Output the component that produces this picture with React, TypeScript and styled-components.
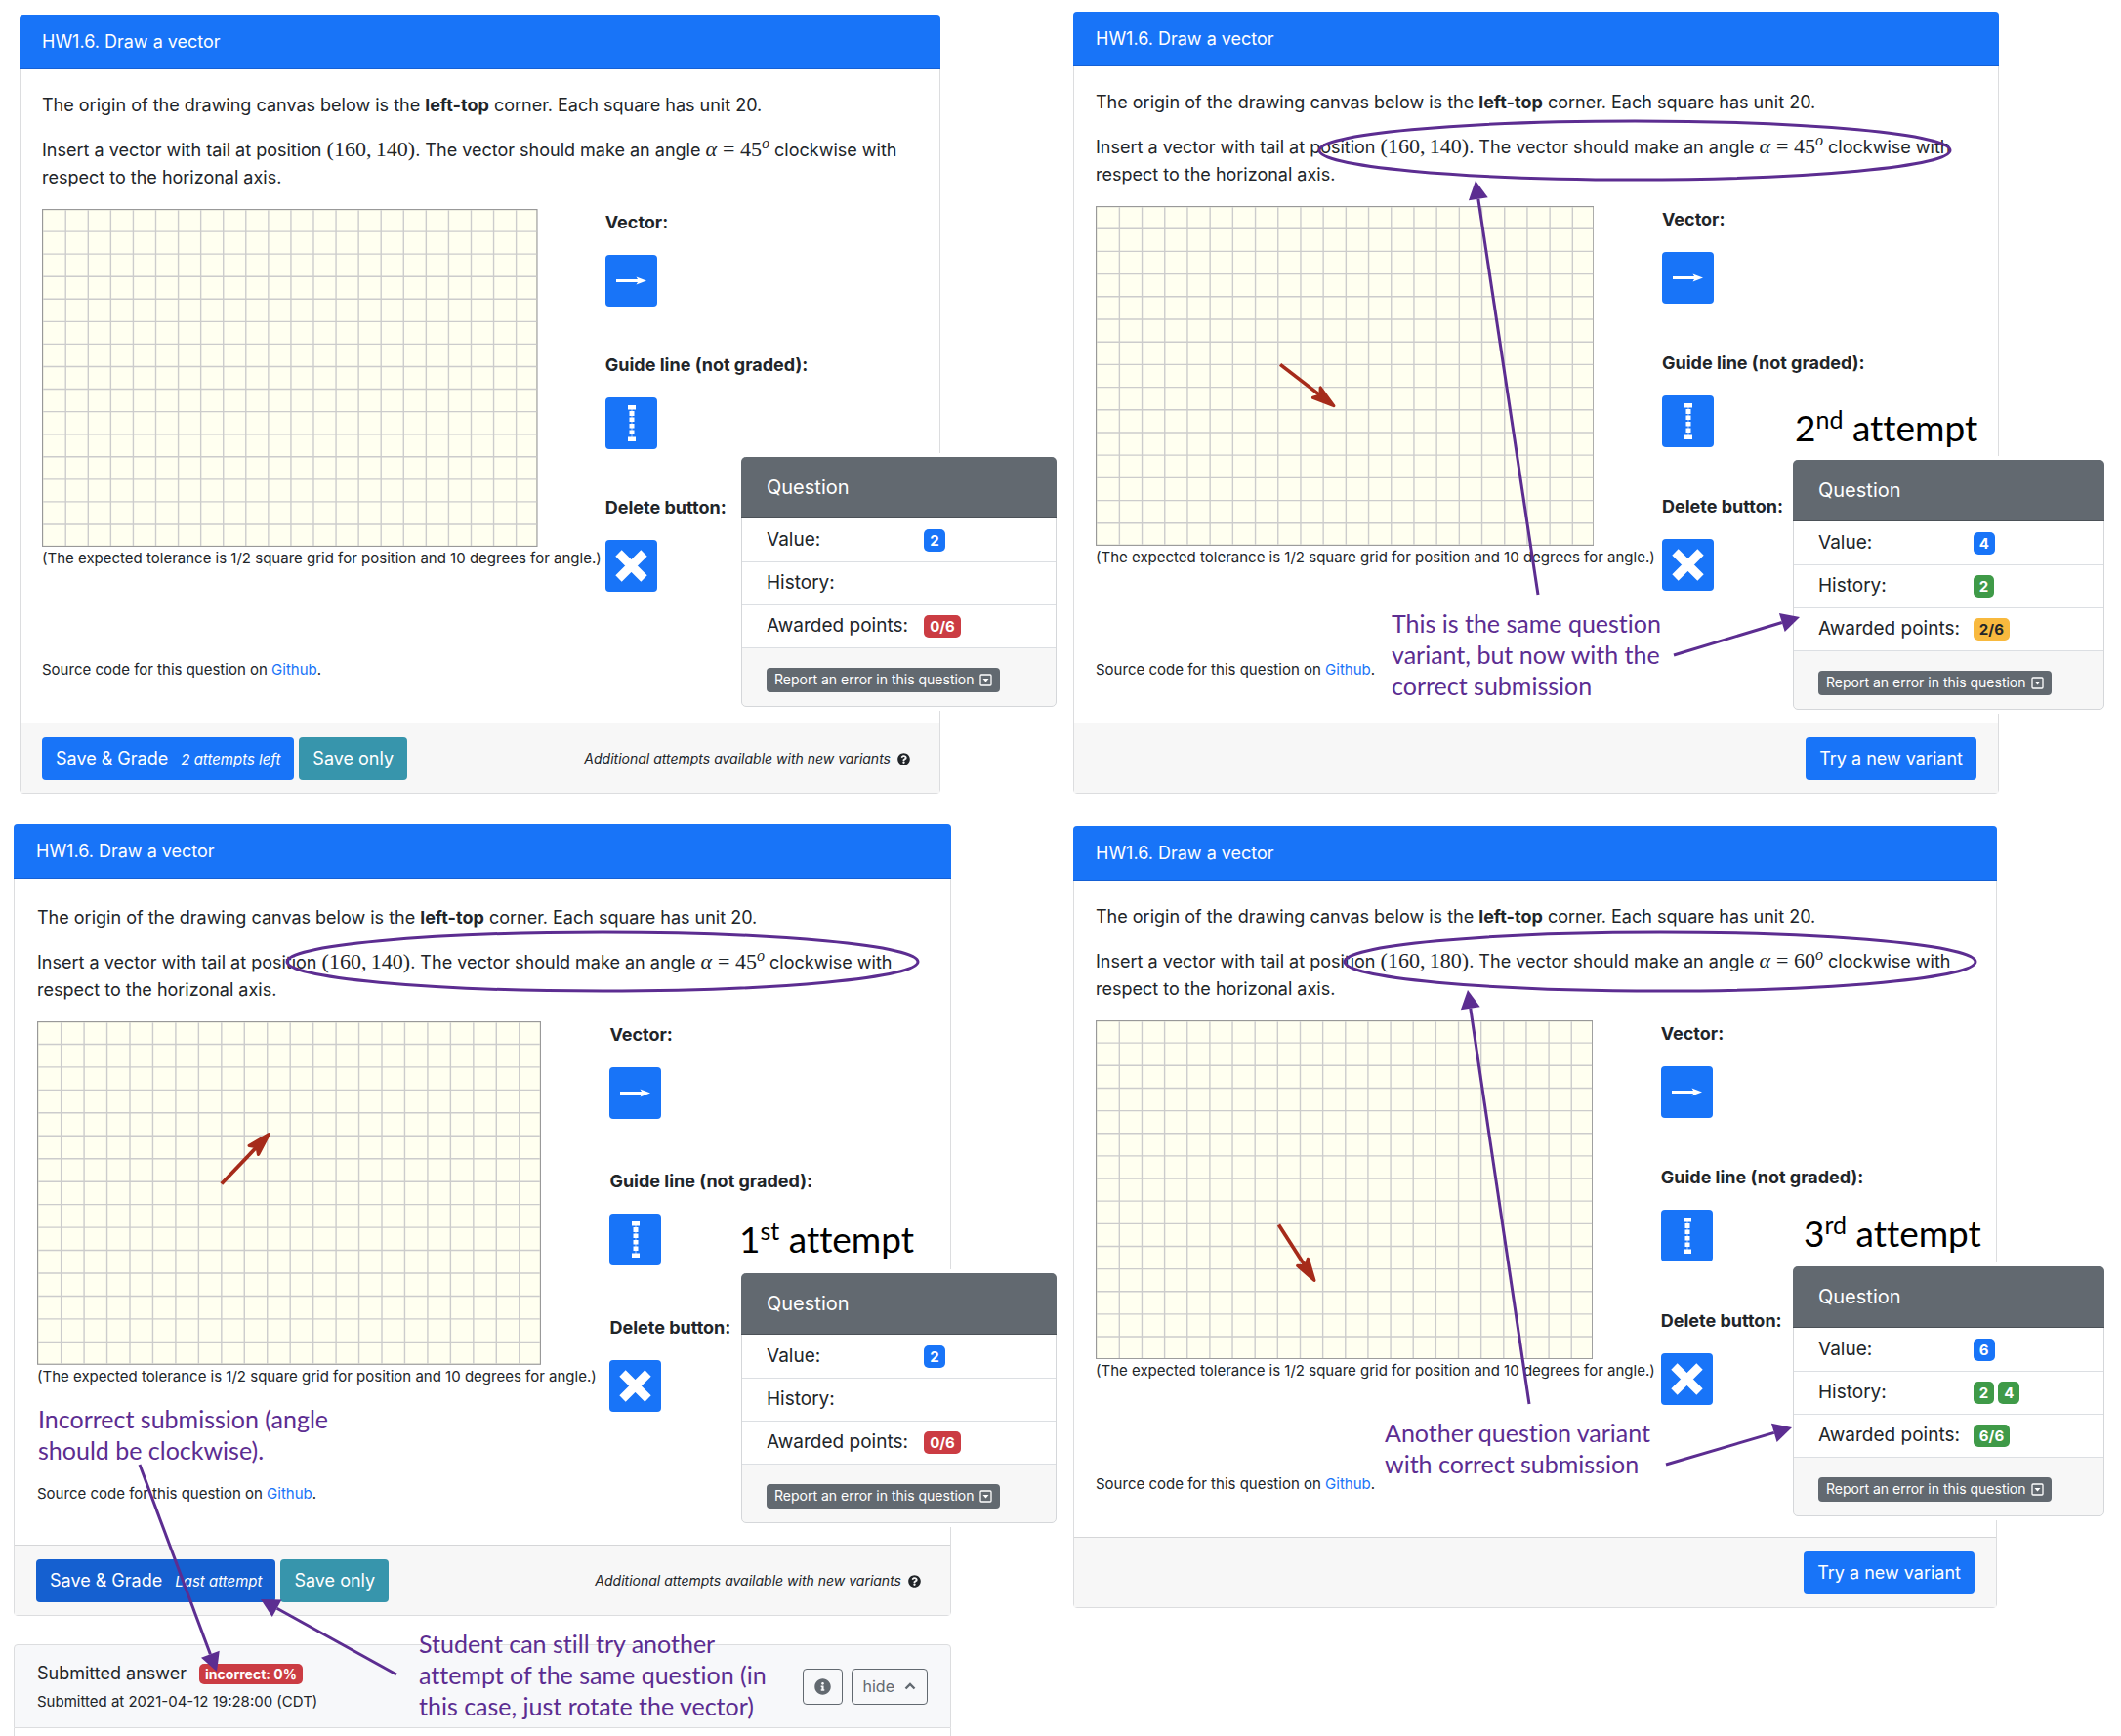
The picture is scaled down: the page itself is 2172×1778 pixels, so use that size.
import React from "react";
import styled, { createGlobalStyle } from "styled-components";

const ui = `Inter, "Liberation Sans", sans-serif`;
const note = `Lato, "Open Sans", sans-serif`;
const purple = "#5c2d91";

const Global = createGlobalStyle`
  *, *::before, *::after { box-sizing: border-box; }
  body { margin: 0; background: #fff; color: #212529; font-family: ${ui}; font-size: 18px; line-height: 28px; }
  p { margin: 0; }
`;

const Board = styled.main`
  display: grid;
  grid-template-columns: minmax(0, 1fr) minmax(0, 1fr);
  row-gap: 31px;
  overflow: hidden;
`;

const Cell = styled.section<{ $pad: string }>`
  position: relative;
  padding: ${(p) => p.$pad};
`;

const Card = styled.article`
  border: 1px solid #dcdddf;
  border-radius: 4px;
  background: #fff;
`;

const CardTitle = styled.h2`
  margin: -1px -1px 0;
  padding: 14px 23px;
  height: 56px;
  border-bottom: 1px solid #1560d4;
  border-radius: 4px 4px 0 0;
  background: #1874f8;
  color: #fff;
  font-size: 18px;
  font-weight: 400;
`;

const CardBody = styled.div<{ $roomy?: boolean }>`
  padding: ${(p) => (p.$roomy ? "26px 23px 40px" : "23px 22px 42px")};
`;

const Para = styled.p`
  margin-bottom: 18px;
`;

const Maths = styled.span`
  font-family: "Liberation Serif", "DejaVu Serif", serif;
  font-size: 22px;
  line-height: 1;
  white-space: nowrap;
  sup { font-size: 16px; font-style: italic; line-height: 0; }
  i { margin-right: 6px; }
`;

const Work = styled.div`
  display: flex;
`;

const DrawSide = styled.div`
  flex: 0 0 64.3%;
`;

const Canvas = styled.svg`
  display: block;
  width: 88%;
  height: auto;
`;

const Small = styled.p`
  font-size: 15px;
  line-height: 24px;
  white-space: nowrap;
  a { color: #1874f8; text-decoration: none; }
`;

const Tools = styled.div<{ $gap: number }>`
  display: flex;
  flex-direction: column;
  gap: ${(p) => p.$gap}px;
  margin-bottom: ${(p) => p.$gap + 22}px;
`;

const Tool = styled.label`
  display: flex;
  flex-direction: column;
  align-items: flex-start;
  gap: 19px;
  font-weight: 700;
  white-space: nowrap;
`;

const ToolButton = styled.button`
  width: 53px;
  height: 53px;
  padding: 0;
  border: 0;
  border-radius: 4px;
  background: #1874f8;
  svg { display: block; width: 53px; height: 53px; }
`;

const CardFooter = styled.footer<{ $end?: boolean }>`
  display: flex;
  align-items: center;
  justify-content: ${(p) => (p.$end ? "flex-end" : "flex-start")};
  gap: 5px;
  padding: 14px 22px 13px;
  border-top: 1px solid #d5d6d8;
  background: #f7f7f7;
`;

const Button = styled.button<{ $tone?: string }>`
  height: 44px;
  padding: 0 14px;
  border: 0;
  border-radius: 4px;
  background: ${(p) => p.$tone || "#1874f8"};
  color: #fff;
  font: 400 18px/28px ${ui};
  white-space: nowrap;
  em { margin-left: 8px; font-size: 15px; }
`;

const Remark = styled.div`
  display: flex;
  align-items: center;
  gap: 7px;
  margin-left: auto;
  padding-right: 8px;
  font-size: 14px;
  font-style: italic;
  white-space: nowrap;
`;

const Widget = styled.aside<{ $top: number; $right: number; $width: number }>`
  position: absolute;
  top: ${(p) => p.$top}px;
  right: ${(p) => p.$right}px;
  width: ${(p) => p.$width}px;
  border: 1px solid #d5d7da;
  border-radius: 5px;
  background: #f7f7f7;
  box-shadow: 0 0 0 4px #fff;
  font-size: 19px;
`;

const WidgetTitle = styled.h3`
  margin: -1px -1px 0;
  padding: 17px 26px;
  height: 63px;
  border-bottom: 1px solid #4b5157;
  border-radius: 5px 5px 0 0;
  background: #626970;
  color: #fff;
  font-size: 20px;
  font-weight: 400;
`;

const Scores = styled.table`
  width: 100%;
  border-collapse: collapse;
  background: #fff;
  th { width: 58%; padding: 0 0 0 25px; font-weight: 400; text-align: left; white-space: nowrap; }
  td { padding: 0; }
  tr { height: 44px; border-bottom: 1px solid #dcdfe3; }
`;

const Badge = styled.span<{ $tone: string; $dark?: boolean }>`
  display: inline-block;
  margin-right: 4px;
  padding: 0 6px;
  border-radius: 5px;
  background: ${(p) => p.$tone};
  color: ${(p) => (p.$dark ? "#212529" : "#fff")};
  font-size: 15px;
  font-weight: 700;
  line-height: 23px;
  vertical-align: middle;
`;

const ResultBadge = styled(Badge)`
  margin-left: 8px;
  font-size: 14px;
  line-height: 21px;
`;

const WidgetFoot = styled.div`
  padding: 20px 25px 14px;
  line-height: 0;
`;

const ReportButton = styled.button`
  display: inline-flex;
  align-items: center;
  gap: 5px;
  height: 25px;
  padding: 0 8px;
  border: 0;
  border-radius: 4px;
  background: #626970;
  color: #fff;
  font: 400 14px/24px ${ui};
  white-space: nowrap;
`;

const Submitted = styled.article`
  display: flex;
  align-items: center;
  justify-content: space-between;
  margin-top: 29px;
  height: 86px;
  padding: 0 23px;
  border: 1px solid #dcdddf;
  border-radius: 4px 4px 0 0;
  background: #f7f8fa;
`;

const SubmittedInfo = styled.div`
  display: grid;
  gap: 3px;
`;

const BelowSubmitted = styled.div`
  height: 8px;
  border: solid #dcdddf;
  border-width: 0 1px;
`;

const OutlineGroup = styled.div`
  display: flex;
  gap: 9px;
`;

const OutlineButton = styled.button`
  display: inline-flex;
  align-items: center;
  gap: 10px;
  height: 37px;
  padding: 0 11px;
  border: 1px solid #626970;
  border-radius: 4px;
  background: transparent;
  color: #626970;
  font: 400 16px/24px ${ui};
`;

const Ink = styled.svg`
  position: absolute;
  inset: 0;
  width: 100%;
  height: 100%;
  overflow: visible;
  pointer-events: none;
`;

const Note = styled.p<{ $x: number; $y: number }>`
  position: absolute;
  left: ${(p) => p.$x}px;
  top: ${(p) => p.$y}px;
  color: ${purple};
  font: 400 25px/32px ${note};
  font-variant-ligatures: none;
  white-space: pre;
`;

const AttemptTitle = styled.h3<{ $x: number; $y: number }>`
  position: absolute;
  left: ${(p) => p.$x}px;
  top: ${(p) => p.$y}px;
  margin: 0;
  color: #000;
  font: 400 37px/44px ${note};
  font-variant-ligatures: none;
  white-space: nowrap;
  sup { font-size: 25px; line-height: 0; }
`;

type Pt = [number, number];

function RedVector({ from, to }: { from: Pt; to: Pt }) {
  const angle = (Math.atan2(to[1] - from[1], to[0] - from[0]) * 180) / Math.PI;
  const len = Math.hypot(to[0] - from[0], to[1] - from[1]);
  return (
    <g transform={`translate(${from[0]} ${from[1]}) rotate(${angle})`} fill="#a62b1a" stroke="#a62b1a" strokeLinejoin="round">
      <path d={`M0 0H${len - 14}`} strokeWidth="3.2" />
      <path d={`M${len - 1} 0L${len - 20} -5.5L${len - 16} 0L${len - 20} 5.5Z`} strokeWidth="2.8" />
    </g>
  );
}

function Grid({ vector }: { vector?: [Pt, Pt] }) {
  const cols = Array.from({ length: 21 }, (_, i) => 21 + i * 20);
  const rows = Array.from({ length: 14 }, (_, i) => 20 + i * 20);
  return (
    <Canvas viewBox="0 0 440 300" role="img" aria-label="Drawing canvas">
      <rect x="0.5" y="0.5" width="439" height="299" fill="#fffff0" stroke="#999" />
      <g stroke="#ccc" strokeWidth="1.2">
        {cols.map((x) => <path key={x} d={`M${x} 1V299`} />)}
        {rows.map((y) => <path key={y} d={`M1 ${y}H439`} />)}
      </g>
      {vector && <RedVector from={vector[0]} to={vector[1]} />}
    </Canvas>
  );
}

function Arrow({ from, to, width = 3 }: { from: Pt; to: Pt; width?: number }) {
  const a = Math.atan2(to[1] - from[1], to[0] - from[0]);
  const base: Pt = [to[0] - 19 * Math.cos(a), to[1] - 19 * Math.sin(a)];
  const dx = -10 * Math.sin(a);
  const dy = 10 * Math.cos(a);
  return (
    <g>
      <line x1={from[0]} y1={from[1]} x2={base[0]} y2={base[1]} stroke={purple} strokeWidth={width} />
      <polygon points={`${to[0]},${to[1]} ${base[0] + dx},${base[1] + dy} ${base[0] - dx},${base[1] - dy}`} fill={purple} />
    </g>
  );
}

const Ring = ({ cx, cy }: { cx: number; cy: number }) => (
  <ellipse cx={cx} cy={cy} rx="323" ry="30" fill="none" stroke={purple} strokeWidth="3" />
);

const VectorIcon = () => (
  <svg viewBox="0 0 53 53" fill="#fff"><path d="M11 25H33L31.500 22.500L42 26.500L31.500 30.500L33 28H11Z" /></svg>
);

const GuideIcon = () => (
  <svg viewBox="0 0 53 53" fill="#fff">
    <path d="M23 8h8v4.500h-8zM24.500 14h5v5h-5zM24.500 20.500h5v4.500h-5zM24.500 27h5v4.500h-5zM24.500 33.500h5v4.500h-5zM23 40.500h8v4.500h-8z" />
    <path d="M27 8V45" stroke="#fff" strokeWidth="0.6" />
  </svg>
);

const DeleteIcon = () => (
  <svg viewBox="0 0 53 53"><path d="M13.500 13.500L39.500 39.500M39.500 13.500L13.500 39.500" stroke="#fff" strokeWidth="9" /></svg>
);

const QuestionIcon = () => (
  <svg width="13" height="13" viewBox="0 0 512 512" fill="#212529"><path d="M504 256c0 137-111 248-248 248S8 393 8 256C8 119.100 119 8 256 8s248 111.100 248 248zM262.700 90c-54.500 0-89.300 23-116.500 63.800-3.500 5.300-2.400 12.400 2.700 16.300l34.700 26.300c5.200 3.900 12.600 3 16.700-2.100 17.900-22.700 30.100-35.800 57.300-35.800 20.400 0 45.700 13.100 45.700 33 0 15-12.400 22.700-32.500 34C247.100 238.500 216 254.900 216 296v4c0 6.600 5.400 12 12 12h56c6.600 0 12-5.400 12-12v-1.300c0-28.500 83.200-29.600 83.200-106.700 0-58-60.200-102-116.500-102zM256 338c-25.400 0-46 20.600-46 46 0 25.400 20.600 46 46 46s46-20.600 46-46c0-25.400-20.600-46-46-46z" /></svg>
);

const InfoIcon = () => (
  <svg width="17" height="17" viewBox="0 0 512 512" fill="#626970"><path d="M256 8C119 8 8 119.100 8 256c0 137 111 248 248 248s248-111 248-248C504 119.100 393 8 256 8zm0 110c23.200 0 42 18.800 42 42s-18.800 42-42 42-42-18.800-42-42 18.800-42 42-42zm56 254c0 6.600-5.400 12-12 12h-88c-6.600 0-12-5.400-12-12v-24c0-6.600 5.400-12 12-12h12v-64h-12c-6.600 0-12-5.400-12-12v-24c0-6.600 5.400-12 12-12h64c6.600 0 12 5.400 12 12v100h12c6.600 0 12 5.400 12 12v24z" /></svg>
);

const ChevronUp = () => (
  <svg width="12" height="8" viewBox="0 0 12 8" fill="none" stroke="#626970" strokeWidth="2.400"><path d="M1.500 6.500L6 2L10.500 6.500" /></svg>
);

const CaretSquare = () => (
  <svg width="13" height="13" viewBox="0 0 13 13"><rect x="1" y="1" width="11" height="11" rx="1" fill="none" stroke="#fff" strokeWidth="1.300" /><path d="M3.500 5h6L6.500 8.500Z" fill="#fff" /></svg>
);

interface CardProps {
  at: string;
  angle: number;
  toolGap?: number;
  vector?: [Pt, Pt];
  children: React.ReactNode;
  end?: boolean;
  roomy?: boolean;
}

function QuestionCard({ at, angle, toolGap = 47, vector, children, end, roomy }: CardProps) {
  return (
    <Card>
      <CardTitle>HW1.6. Draw a vector</CardTitle>
      <CardBody $roomy={roomy}>
        <Para>The origin of the drawing canvas below is the <b>left-top</b> corner. Each square has unit 20.</Para>
        <Para>
          Insert a vector with tail at position <Maths>(160,&thinsp;{at})</Maths>. The vector should make an angle{" "}
          <Maths><i>α</i>=&nbsp;{angle}<sup>o</sup></Maths> clockwise with respect to the horizonal axis.
        </Para>
        <Work>
          <DrawSide>
            <Grid vector={vector} />
            <Small>(The expected tolerance is 1/2 square grid for position and 10 degrees for angle.)</Small>
          </DrawSide>
          <Tools $gap={toolGap}>
            <Tool>Vector:<ToolButton type="button"><VectorIcon /></ToolButton></Tool>
            <Tool>Guide line (not graded):<ToolButton type="button"><GuideIcon /></ToolButton></Tool>
            <Tool>Delete button:<ToolButton type="button"><DeleteIcon /></ToolButton></Tool>
          </Tools>
        </Work>
        <Small>Source code for this question on <a href="#source">Github</a>.</Small>
      </CardBody>
      <CardFooter $end={end}>{children}</CardFooter>
    </Card>
  );
}

function SaveActions({ left, active }: { left: string; active?: boolean }) {
  return (
    <>
      <Button type="button" $tone={active ? "#1560d0" : undefined}>Save &amp; Grade <em>{left}</em></Button>
      <Button type="button" $tone="#3795ac">Save only</Button>
      <Remark>Additional attempts available with new variants <QuestionIcon /></Remark>
    </>
  );
}

const green = "#3f9a48";
const red = "#cb3c43";

interface ScoreProps {
  top: number;
  right: number;
  width: number;
  value: string;
  history: string[];
  points: string;
  tone: string;
  dark?: boolean;
}

function ScoreWidget({ top, right, width, value, history, points, tone, dark }: ScoreProps) {
  return (
    <Widget $top={top} $right={right} $width={width}>
      <WidgetTitle>Question</WidgetTitle>
      <Scores>
        <tbody>
          <tr><th scope="row">Value:</th><td><Badge $tone="#1874f8">{value}</Badge></td></tr>
          <tr><th scope="row">History:</th><td>{history.map((h) => <Badge key={h} $tone={green}>{h}</Badge>)}</td></tr>
          <tr><th scope="row">Awarded points:</th><td><Badge $tone={tone} $dark={dark}>{points}</Badge></td></tr>
        </tbody>
      </Scores>
      <WidgetFoot>
        <ReportButton type="button">Report an error in this question <CaretSquare /></ReportButton>
      </WidgetFoot>
    </Widget>
  );
}

export default function App() {
  return (
    <>
      <Global />
      <Board>
        <Cell $pad="15px 123px 0 20px">
          <QuestionCard at="140" angle={45} toolGap={46}>
            <SaveActions left="2 attempts left" />
          </QuestionCard>
          <ScoreWidget top={468} right={4} width={323} value="2" history={[]} points="0/6" tone={red} />
        </Cell>

        <Cell $pad="12px 125px 0 13px">
          <QuestionCard at="140" angle={45} end vector={[[163, 140], [211, 177]]}>
            <Button type="button">Try a new variant</Button>
          </QuestionCard>
          <ScoreWidget top={471} right={17} width={319} value="4" history={["2"]} points="2/6" tone="#f8b93e" dark />
          <AttemptTitle $x={752} $y={416}>2<sup>nd</sup> attempt</AttemptTitle>
          <Note $x={339} $y={622}>{"This is the same question\nvariant, but now with the\ncorrect submission"}</Note>
          <Ink>
            <Ring cx={588} cy={154} />
            <Arrow from={[489, 609]} to={[425, 185]} />
            <Arrow from={[628, 671]} to={[757, 632]} />
          </Ink>
        </Cell>

        <Cell $pad="0 112px 0 14px">
          <QuestionCard at="140" angle={45} toolGap={50} roomy vector={[[161, 142], [203, 98]]}>
            <SaveActions left="Last attempt" active />
          </QuestionCard>
          <Submitted>
            <SubmittedInfo>
              <p>Submitted answer <ResultBadge $tone={red}>incorrect: 0%</ResultBadge></p>
              <Small>Submitted at 2021-04-12 19:28:00 (CDT)</Small>
            </SubmittedInfo>
            <OutlineGroup>
              <OutlineButton type="button" aria-label="Details"><InfoIcon /></OutlineButton>
              <OutlineButton type="button">hide <ChevronUp /></OutlineButton>
            </OutlineGroup>
          </Submitted>
          <BelowSubmitted />
          <ScoreWidget top={460} right={4} width={323} value="2" history={[]} points="0/6" tone={red} />
          <AttemptTitle $x={757} $y={403}>1<sup>st</sup> attempt</AttemptTitle>
          <Note $x={39} $y={593}>{"Incorrect submission (angle\nshould be clockwise)."}</Note>
          <Note $x={429} $y={823}>{"Student can still try another\nattempt of the same question (in\nthis case, just rotate the vector)"}</Note>
          <Ink>
            <Ring cx={617} cy={141} />
            <Arrow from={[143, 656]} to={[222, 868]} />
            <Arrow from={[406, 871]} to={[267, 794]} />
          </Ink>
        </Cell>

        <Cell $pad="2px 127px 0 13px">
          <QuestionCard at="180" angle={60} end vector={[[162, 181], [194, 231]]}>
            <Button type="button">Try a new variant</Button>
          </QuestionCard>
          <ScoreWidget top={453} right={17} width={319} value="6" history={["2", "4"]} points="6/6" tone={green} />
          <AttemptTitle $x={761} $y={397}>3<sup>rd</sup> attempt</AttemptTitle>
          <Note $x={332} $y={607}>{"Another question variant\nwith correct submission"}</Note>
          <Ink>
            <Ring cx={614} cy={141} />
            <Arrow from={[480, 594]} to={[417, 170]} />
            <Arrow from={[620, 656]} to={[749, 618]} />
          </Ink>
        </Cell>
      </Board>
    </>
  );
}
